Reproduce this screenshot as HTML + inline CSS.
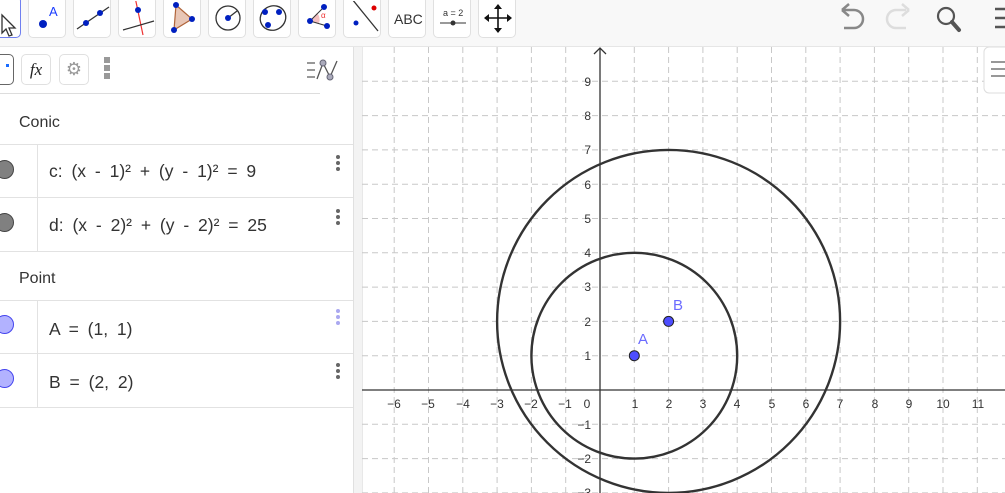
<!DOCTYPE html>
<html><head><meta charset="utf-8"><style>
body{margin:0;width:1005px;height:493px;overflow:hidden;background:#fff;font-family:"Liberation Sans",sans-serif;position:relative}
.tb{position:absolute;left:0;top:0;width:1005px;height:47px;background:#f8f8f8;border-bottom:1px solid #e6e6e6;box-sizing:border-box}
.btn{position:absolute;top:-4px;width:38px;height:42px;background:#fff;border:1px solid #e0e0e0;border-radius:5px;box-sizing:border-box}
.btn svg{position:absolute;left:0;top:4px}
.left{position:absolute;left:0;top:47px;width:353px;height:446px;background:#fff;border-right:1px solid #e0e0e0}
.split{position:absolute;left:354px;top:47px;width:8px;height:446px;background:#f3f3f3;border-right:1px solid #e8e8e8}
.hb{position:absolute;top:7px;width:30px;height:31px;border:1px solid #e0e0e0;border-radius:5px;box-sizing:border-box;background:#fff}
.row{position:absolute;left:0;width:353px;border-bottom:1px solid #e2e2e2;box-sizing:border-box}
.cat{font-size:16px;color:#333}
.eq{position:absolute;left:49px;font-size:17.5px;color:#333;font-family:"Liberation Sans",sans-serif;word-spacing:4px}
.col{position:absolute;left:37px;top:0;bottom:0;border-left:1px solid #e2e2e2}
.dot{position:absolute;left:-5px;width:19px;height:19px;border-radius:50%;box-sizing:border-box}
.menu{position:absolute;left:336px;width:4px}
.menu i{display:block;width:4px;height:4px;border-radius:50%;background:#666;margin-bottom:2px}
</style></head><body>
<div class="tb">
 <div class="btn" style="left:-17px;width:38px;border:1.5px solid #6f7ff0"><svg width="38" height="38"><path d="M18 14 L18 32 L22 28 L25 35 L28 34 L25 27 L31 27 Z" fill="#fff" stroke="#333" stroke-width="1.3"/></svg></div>
 <div class="btn" style="left:28px"><svg width="38" height="38"><circle cx="14" cy="23" r="4" fill="#0020c0"/><text x="20" y="15" font-size="13" fill="#1a3cff" font-family="Liberation Sans">A</text></svg></div>
 <div class="btn" style="left:73px"><svg width="38" height="38"><line x1="3" y1="28" x2="35" y2="6" stroke="#333" stroke-width="1.3"/><circle cx="12" cy="22" r="3" fill="#0020c0"/><circle cx="26" cy="12" r="3" fill="#0020c0"/></svg></div>
 <div class="btn" style="left:118px"><svg width="38" height="38"><line x1="16" y1="-4" x2="24" y2="34" stroke="#e33" stroke-width="1.2"/><line x1="4" y1="29" x2="35" y2="20" stroke="#333" stroke-width="1.2"/><circle cx="19" cy="9" r="3" fill="#0020c0"/></svg></div>
 <div class="btn" style="left:163px"><svg width="38" height="38"><path d="M12 4 L28 18 L10 29 Z" fill="#e8c6b6" stroke="#b0643a" stroke-width="1.2"/><circle cx="12" cy="4" r="3" fill="#0020c0"/><circle cx="28" cy="18" r="3" fill="#0020c0"/><circle cx="10" cy="29" r="3" fill="#0020c0"/></svg></div>
 <div class="btn" style="left:208px"><svg width="38" height="38"><circle cx="19" cy="17" r="12" fill="none" stroke="#333" stroke-width="1.3"/><line x1="19" y1="17" x2="28" y2="10" stroke="#333" stroke-width="1.3"/><circle cx="19" cy="17" r="3" fill="#0020c0"/></svg></div>
 <div class="btn" style="left:253px"><svg width="38" height="38"><ellipse cx="19" cy="17" rx="13" ry="12" transform="rotate(-30 19 17)" fill="none" stroke="#333" stroke-width="1.3"/><circle cx="11" cy="11" r="3" fill="#0020c0"/><circle cx="25" cy="11" r="3" fill="#0020c0"/><circle cx="14" cy="24" r="3" fill="#0020c0"/></svg></div>
 <div class="btn" style="left:298px"><svg width="38" height="38"><path d="M11 20 L18 12 A10 10 0 0 1 20 22 Z" fill="#f4c0c0"/><line x1="11" y1="20" x2="25" y2="6" stroke="#333"/><line x1="11" y1="20" x2="28" y2="25" stroke="#333"/><circle cx="11" cy="20" r="3" fill="#0020c0"/><circle cx="25" cy="6" r="3" fill="#0020c0"/><circle cx="28" cy="25" r="3" fill="#0020c0"/><text x="22" y="17" font-size="8" fill="#e33">α</text></svg></div>
 <div class="btn" style="left:343px"><svg width="38" height="38"><line x1="8" y1="-2" x2="34" y2="30" stroke="#333" stroke-width="1.3"/><circle cx="30" cy="7" r="2.5" fill="#d00"/><circle cx="12" cy="22" r="2.5" fill="#0020c0"/></svg></div>
 <div class="btn" style="left:388px"><svg width="38" height="38"><text x="5" y="23" font-size="14" fill="#333" font-family="Liberation Sans">ABC</text></svg></div>
 <div class="btn" style="left:433px"><svg width="38" height="38"><text x="9" y="15" font-size="9" fill="#333" font-family="Liberation Sans">a = 2</text><line x1="6" y1="22" x2="32" y2="22" stroke="#333"/><circle cx="19" cy="22" r="2.5" fill="#333"/></svg></div>
 <div class="btn" style="left:478px"><svg width="38" height="38"><path d="M19 4 V31 M6 17 H32" stroke="#111" stroke-width="1.6"/><path d="M19 3 L15 8 H23Z M19 32 L15 27 H23Z M5 17 L10 13 V21Z M33 17 L28 13 V21Z" fill="#111"/></svg></div>
 <svg style="position:absolute;left:830px;top:0" width="175" height="40"><path d="M14 10 L24 10 A8 8 0 0 1 24 28 L14 28" fill="none" stroke="#888" stroke-width="2.5"/><path d="M12 10 L19 4 M12 10 L19 16" stroke="#888" stroke-width="2.5"/><path d="M76 10 L66 10 A8 8 0 0 0 66 28 L76 28" fill="none" stroke="#ddd" stroke-width="2.5"/><path d="M79 10 L72 4 M79 10 L72 16" stroke="#ddd" stroke-width="2.5"/><circle cx="116" cy="16" r="8" fill="none" stroke="#555" stroke-width="2.2"/><line x1="122" y1="22" x2="129" y2="30" stroke="#555" stroke-width="4" stroke-linecap="round"/><path d="M165 9 H180 M165 18 H180 M165 27 H180" stroke="#555" stroke-width="2.5"/></svg>
</div>

<div class="left">
 <div class="hb" style="left:-16px;border:1.5px solid #666"><div style="position:absolute;right:4px;top:9px;width:3px;height:10px;border-top:3px dotted #1a6cff"></div></div>
 <div class="hb" style="left:21px;font-family:'Liberation Serif',serif;font-style:italic;font-size:17px;line-height:29px;text-align:center;color:#222">fx</div>
 <div class="hb" style="left:59px;text-align:center;font-size:18px;line-height:29px;color:#999">⚙</div>
 <div style="position:absolute;left:104px;top:10px;width:6px"><div style="height:6px;background:#999;margin-bottom:2px"></div><div style="height:6px;background:#999;margin-bottom:2px"></div><div style="height:6px;background:#999"></div></div>
 <svg style="position:absolute;left:305px;top:12px" width="40" height="24"><path d="M2 4 H10 M2 11 H10 M2 18 H10" stroke="#777" stroke-width="1.5"/><path d="M12 20 L18 4 L25 18 L32 2" fill="none" stroke="#555" stroke-width="1.3"/><circle cx="18" cy="4" r="3" fill="#aab" stroke="#667"/><circle cx="25" cy="18" r="3" fill="#aab" stroke="#667"/></svg>
 <div style="position:absolute;left:0;top:46px;width:320px;border-top:1px solid #ddd"></div>

 <div class="row" style="top:47px;height:51px"><span class="cat" style="position:absolute;left:19px;top:20px">Conic</span></div>
 <div class="row" style="top:98px;height:53px"><div class="dot" style="top:15px;background:#808080;border:1.5px solid #444"></div><div class="col"></div><span class="eq" style="top:16px">c: (x - 1)² + (y - 1)² = 9</span><div class="menu" style="top:10px"><i></i><i></i><i></i></div></div>
 <div class="row" style="top:151px;height:54px"><div class="dot" style="top:15px;background:#808080;border:1.5px solid #444"></div><div class="col"></div><span class="eq" style="top:17px">d: (x - 2)² + (y - 2)² = 25</span><div class="menu" style="top:11px"><i></i><i></i><i></i></div></div>
 <div class="row" style="top:205px;height:49px"><span class="cat" style="position:absolute;left:19px;top:18px">Point</span></div>
 <div class="row" style="top:254px;height:53px"><div class="dot" style="top:14px;background:#b2b2ff;border:1.5px solid #4444ee"></div><div class="col"></div><span class="eq" style="top:18px">A = (1, 1)</span><div class="menu" style="top:8px"><i style="background:#aaa8f0"></i><i style="background:#aaa8f0"></i><i style="background:#aaa8f0"></i></div></div>
 <div class="row" style="top:307px;height:54px"><div class="dot" style="top:15px;background:#b2b2ff;border:1.5px solid #4444ee"></div><div class="col"></div><span class="eq" style="top:18px">B = (2, 2)</span><div class="menu" style="top:9px"><i></i><i></i><i></i></div></div>
</div>
<div class="split"></div>

<svg style="position:absolute;left:362px;top:47px" width="643" height="446" viewBox="362 47 643 446" font-family="Liberation Sans" font-size="12" fill="#333">
 <g stroke="#c8c8c8" stroke-width="1" stroke-dasharray="6,4">
  <path d="M394.2 47V493M428.5 47V493M462.8 47V493M497.1 47V493M531.4 47V493M565.7 47V493M634.3 47V493M668.6 47V493M702.9 47V493M737.2 47V493M771.5 47V493M805.8 47V493M840.1 47V493M874.4 47V493M908.7 47V493M943 47V493M977.3 47V493"/>
  <path d="M362 81.3H1005M362 115.6H1005M362 149.9H1005M362 184.2H1005M362 218.5H1005M362 252.8H1005M362 287.1H1005M362 321.4H1005M362 355.7H1005M362 424.3H1005M362 458.6H1005M362 492.9H1005"/>
 </g>
 <line x1="362" y1="390" x2="1005" y2="390" stroke="#333" stroke-width="1.3"/>
 <line x1="600" y1="48" x2="600" y2="493" stroke="#333" stroke-width="1.3"/>
 <path d="M594 54 L600 48 L606 54" fill="none" stroke="#333" stroke-width="1.3"/>
 <g text-anchor="middle">
  <text x="394" y="408">−6</text><text x="428" y="408">−5</text><text x="463" y="408">−4</text><text x="497" y="408">−3</text><text x="531" y="408">−2</text><text x="565" y="408">−1</text><text x="587" y="408">0</text>
  <text x="635" y="408">1</text><text x="669" y="408">2</text><text x="703" y="408">3</text><text x="737" y="408">4</text><text x="772" y="408">5</text><text x="806" y="408">6</text><text x="840" y="408">7</text><text x="875" y="408">8</text><text x="909" y="408">9</text><text x="943" y="408">10</text><text x="978" y="408">11</text>
 </g>
 <g text-anchor="end">
  <text x="591" y="86">9</text><text x="591" y="120">8</text><text x="591" y="154">7</text><text x="591" y="189">6</text><text x="591" y="223">5</text><text x="591" y="257">4</text><text x="591" y="291">3</text><text x="591" y="326">2</text><text x="591" y="360">1</text><text x="591" y="429">−1</text><text x="591" y="463">−2</text><text x="591" y="497">−3</text>
 </g>
 <circle cx="634.3" cy="355.7" r="102.9" fill="none" stroke="#333" stroke-width="2.4"/>
 <circle cx="668.6" cy="321.4" r="171.5" fill="none" stroke="#333" stroke-width="2.4"/>
 <circle cx="634.3" cy="355.7" r="5" fill="#4d4dff" stroke="#222" stroke-width="1"/>
 <circle cx="668.6" cy="321.4" r="5" fill="#4d4dff" stroke="#222" stroke-width="1"/>
 <text x="638" y="344" font-size="15" fill="#6b6bff">A</text>
 <text x="673" y="310" font-size="15" fill="#6b6bff">B</text>
 <rect x="984" y="47" width="30" height="46" rx="5" fill="#fff" stroke="#ddd"/>
 <path d="M991 62 H1005 M991 69 H1005 M991 76 H1005" stroke="#777" stroke-width="1.5"/>
</svg>
</body></html>
